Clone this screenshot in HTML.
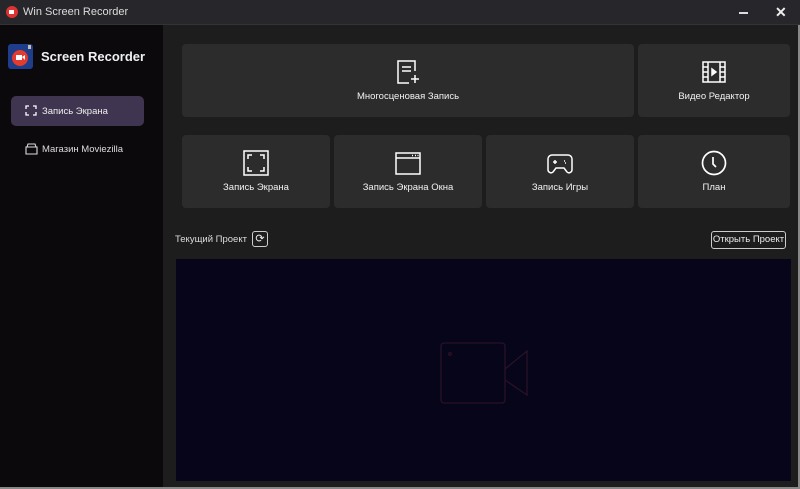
<!DOCTYPE html>
<html><head><meta charset="utf-8"><style>
*{margin:0;padding:0;box-sizing:border-box}
body{width:800px;height:489px;overflow:hidden;background:#1c1c1c;font-family:"Liberation Sans",sans-serif;color:#eee;position:relative}
.tb{position:absolute;left:0;top:0;width:800px;height:25px;background:#26262b;border-bottom:1px solid #333}
.tb span{position:absolute;left:23px;top:6px;font-size:11px;color:#ddd}
.side{position:absolute;left:0;top:25px;width:163px;height:464px;background:#0b090c}
.main{position:absolute;left:163px;top:25px;width:637px;height:464px;background:#1d1d1d}
.card{position:absolute;background:#2c2c2c;border-radius:4px;text-align:center;font-size:9.5px;color:#f2f2f2}
.card svg{position:absolute;left:50%;transform:translateX(-50%);top:15px}
.card div{position:absolute;width:100%;top:47px}
.prev{position:absolute;left:176px;top:259px;width:615px;height:222px;background:#06051a}
</style></head><body>
<div class="tb">
<svg style="position:absolute;left:5px;top:5px" width="14" height="14"><circle cx="7" cy="7" r="6" fill="#d33"/><rect x="4" y="5" width="5" height="4" fill="#fff"/></svg>
<span>Win Screen Recorder</span>
<div style="position:absolute;left:739px;top:12px;width:9px;height:1.5px;background:#ddd"></div>
<div style="position:absolute;left:775px;top:4px;font-size:14px;font-weight:bold;color:#eee">✕</div>
</div>
<div class="side">
<svg style="position:absolute;left:8px;top:19px" width="25" height="25"><rect width="25" height="25" rx="3" fill="#1e3d8a"/><circle cx="12" cy="14" r="8" fill="#e23b30"/><rect x="8" y="11" width="6" height="5" fill="#fff"/><polygon points="14,13 17,11 17,16" fill="#fff"/><rect x="20" y="1" width="3" height="4" fill="#cba"/></svg>
<div style="position:absolute;left:41px;top:24px;font-size:13px;font-weight:bold;color:#f0f0f0">Screen Recorder</div>
<div style="position:absolute;left:11px;top:71px;width:133px;height:30px;background:#3f3550;border-radius:5px"></div>
<svg style="position:absolute;left:25px;top:80px" width="12" height="11" fill="none" stroke="#fff" stroke-width="1.3"><path d="M1 4V1h3M8 1h3v3M11 7v3H8M4 10H1V7"/></svg>
<div style="position:absolute;left:42px;top:81px;font-size:9.5px">Запись Экрана</div>
<svg style="position:absolute;left:25px;top:118px" width="13" height="12" fill="none" stroke="#ddd" stroke-width="1.1"><path d="M1 4h11v7H1zM2 4l1-3h7l1 3"/></svg>
<div style="position:absolute;left:42px;top:119px;font-size:9.5px;color:#ddd">Магазин Moviezilla</div>
</div>
<div class="main"></div>
<div class="card" style="left:182px;top:44px;width:452px;height:73px"><svg width="26" height="26" fill="none" stroke="#fff" stroke-width="1.5"><path d="M20 12V2H3v22h11M7 8h9M7 12h9M20 16v8M16 20h8"/></svg><div>Многосценовая Запись</div></div>
<div class="card" style="left:638px;top:44px;width:152px;height:73px"><svg width="26" height="26" fill="none" stroke="#fff" stroke-width="1.5"><rect x="2" y="3" width="22" height="20"/><path d="M7 3v20M19 3v20M2 8h5M2 13h5M2 18h5M19 8h5M19 13h5M19 18h5"/><polygon points="11,10 15,13 11,16" fill="#fff"/></svg><div>Видео Редактор</div></div>
<div class="card" style="left:182px;top:135px;width:148px;height:73px"><svg width="26" height="26" fill="none" stroke="#fff" stroke-width="1.5"><rect x="1" y="1" width="24" height="24"/><path d="M5 9V5h4M17 5h4v4M21 17v4h-4M9 21H5v-4"/></svg><div>Запись Экрана</div></div>
<div class="card" style="left:334px;top:135px;width:148px;height:73px"><svg width="26" height="26" fill="none" stroke="#fff" stroke-width="1.5"><rect x="1" y="3" width="24" height="21"/><path d="M1 8h24M17 5.5h1M20 5.5h1M22.5 5.5h1"/></svg><div>Запись Экрана Окна</div></div>
<div class="card" style="left:486px;top:135px;width:148px;height:73px"><svg width="26" height="26" fill="none" stroke="#fff" stroke-width="1.5"><path d="M5 5h16a4 4 0 0 1 4 4v11a3 3 0 0 1-5 2l-3-4H9l-3 4a3 3 0 0 1-5-2V9a4 4 0 0 1 4-4zM6 12h4M8 10v4M17 11h1M18 13h1"/></svg><div>Запись Игры</div></div>
<div class="card" style="left:638px;top:135px;width:152px;height:73px"><svg width="26" height="26" fill="none" stroke="#fff" stroke-width="1.7"><circle cx="13" cy="13" r="11.5"/><path d="M12 7v7l3 3"/></svg><div>План</div></div>
<div style="position:absolute;left:175px;top:234px;font-size:9.5px;color:#ddd">Текущий Проект</div>
<div style="position:absolute;left:252px;top:231px;width:16px;height:16px;border:1px solid #ccc;border-radius:3px;font-size:11px;text-align:center;line-height:14px">⟳</div>
<div style="position:absolute;left:711px;top:231px;width:75px;height:18px;border:1px solid #ccc;border-radius:3px;font-size:9.5px;text-align:center;line-height:16px">Открыть Проект</div>
<div class="prev"><svg style="position:absolute;left:262px;top:81px" width="94" height="66" fill="none" stroke="#2a1226" stroke-width="1.3"><rect x="3" y="3" width="64" height="60" rx="3"/><path d="M67 29l22-18v44L67 40"/><circle cx="12" cy="14" r="1.3"/></svg></div>
<div style="position:absolute;left:798px;top:25px;width:2px;height:464px;background:#888"></div>
<div style="position:absolute;left:0;top:487px;width:800px;height:2px;background:#888"></div>
</body></html>
